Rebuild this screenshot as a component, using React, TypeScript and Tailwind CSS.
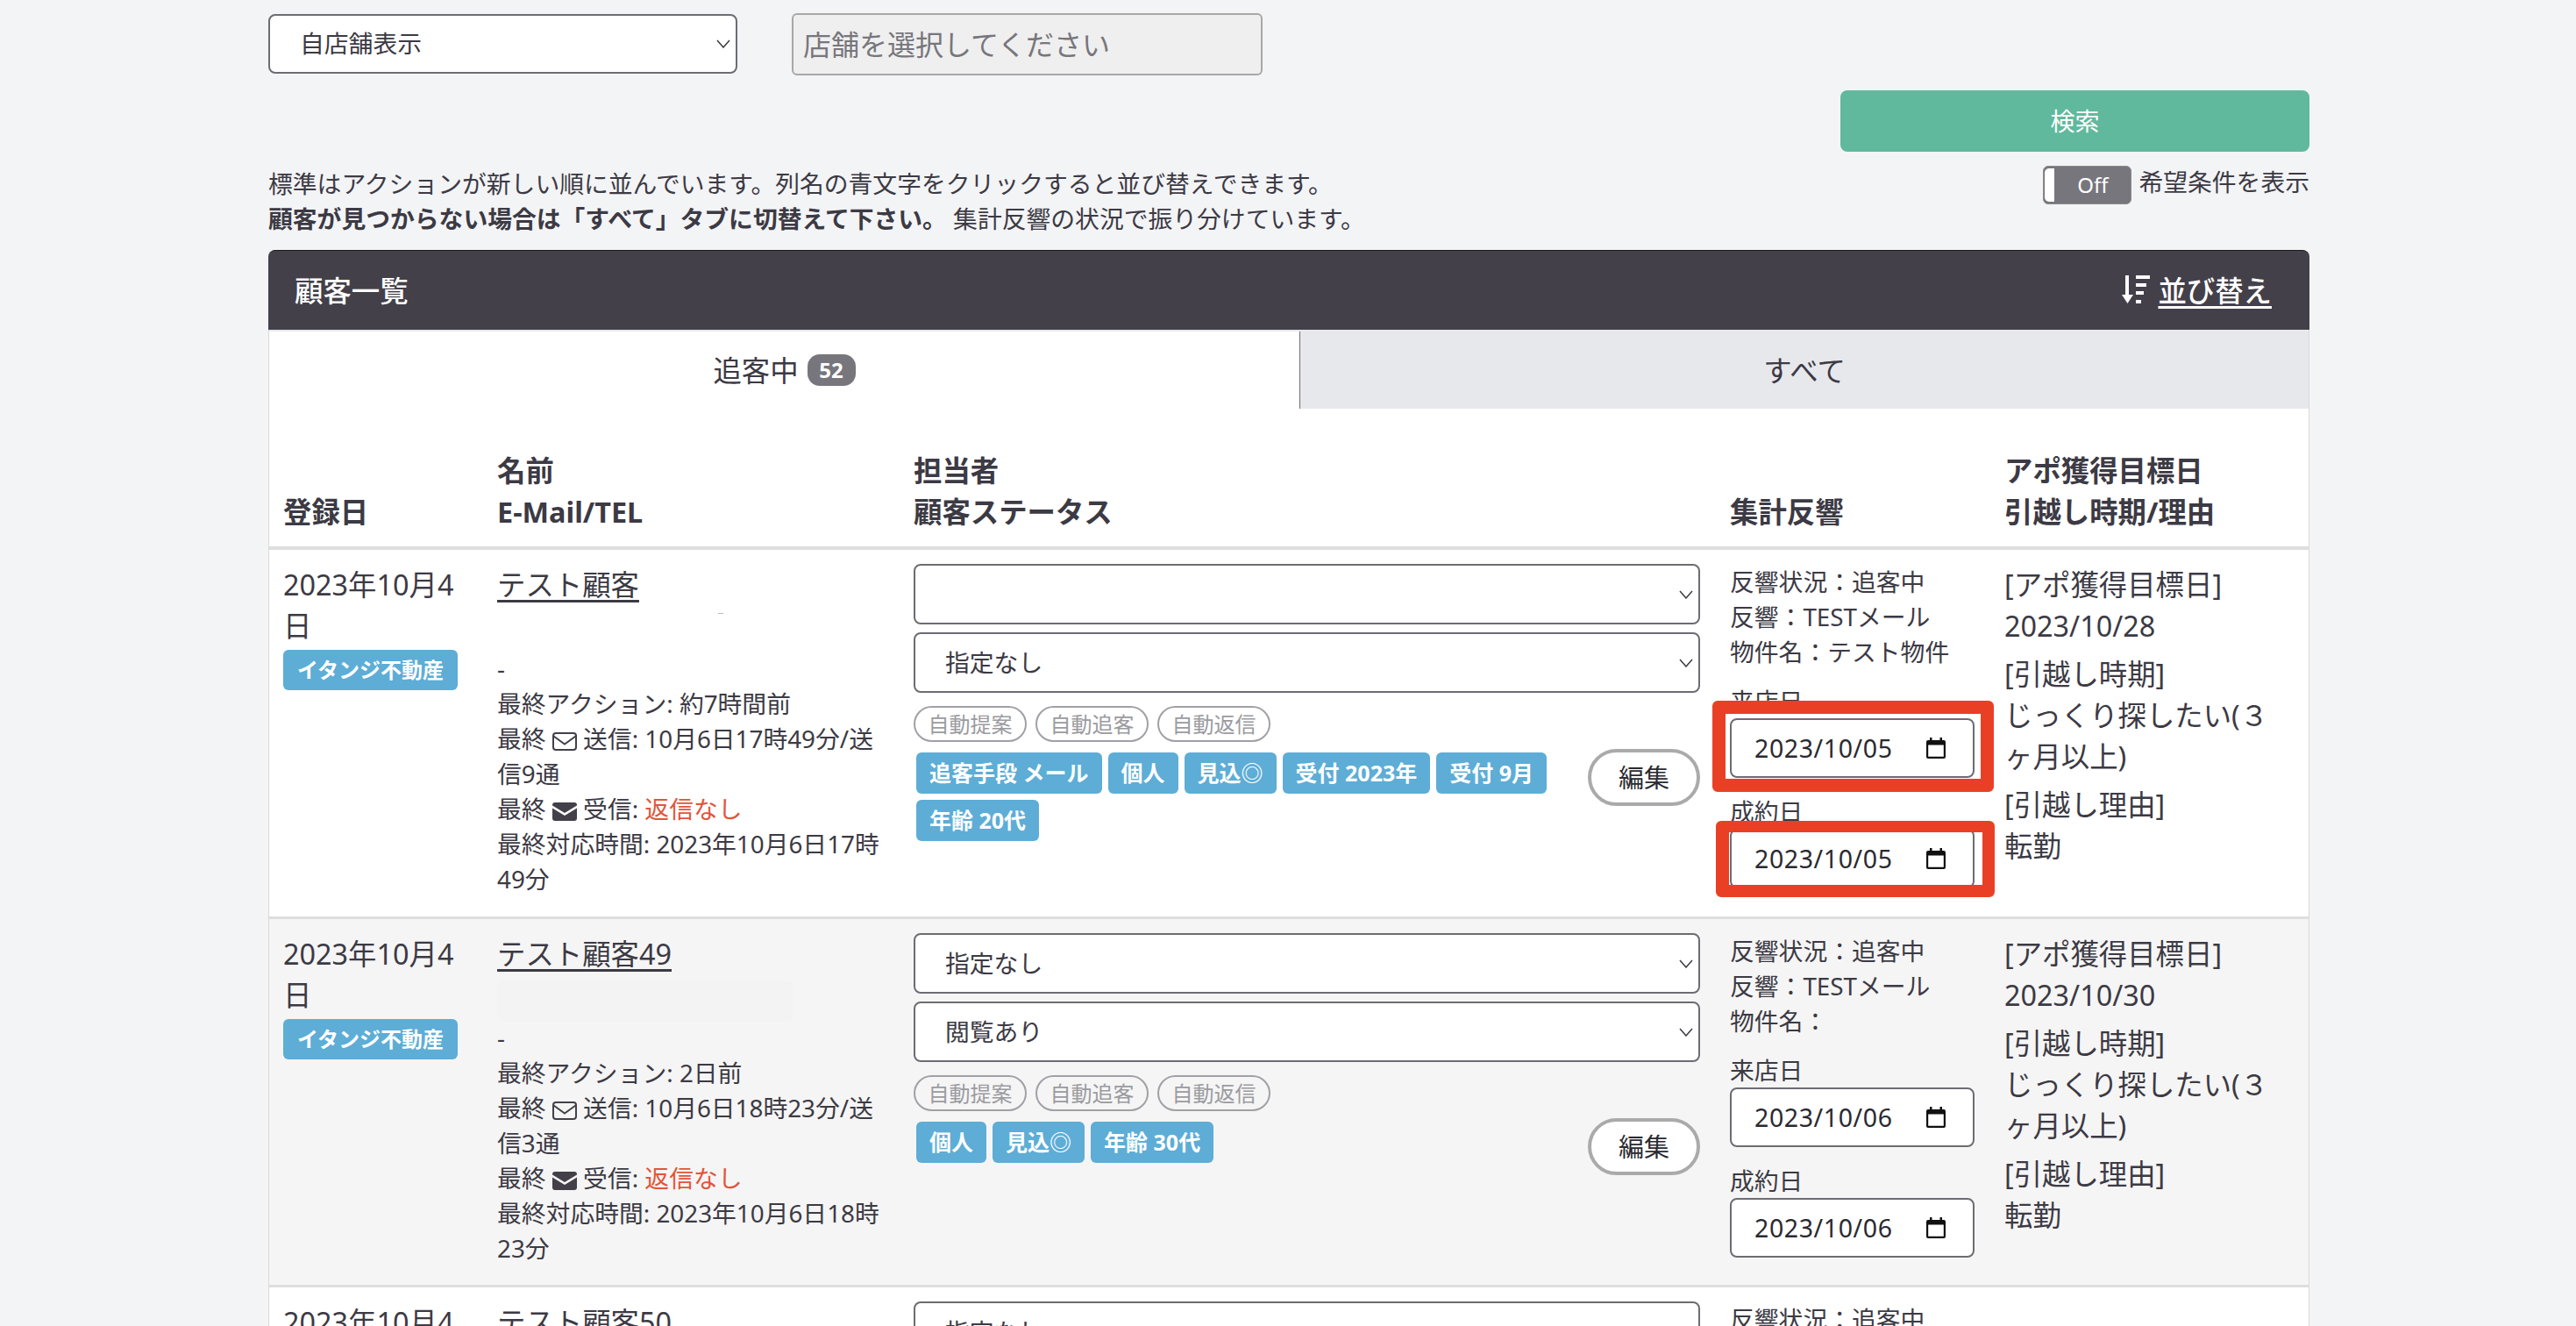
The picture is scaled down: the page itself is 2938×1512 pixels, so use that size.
import React from 'react';

interface Customer {
  name: string;
  staff: string;
  status: string;
  action: string;
  sent: string;
  lastTime: string;
  tags: string[];
  property: string;
  visit: string;
  target: string;
  rowClass: string;
  redacted?: boolean;
  marked?: boolean;
}

const customers: Customer[] = [
  {
    name: 'テスト顧客',
    staff: '',
    status: '指定なし',
    action: '約7時間前',
    sent: '10月6日17時49分/送信9通',
    lastTime: '2023年10月6日17時49分',
    tags: ['追客手段 メール', '個人', '見込◎', '受付 2023年', '受付 9月', '年齢 20代'],
    property: 'テスト物件',
    visit: '2023/10/05',
    target: '2023/10/28',
    rowClass: 'h-[421px] bg-white',
    marked: true,
  },
  {
    name: 'テスト顧客49',
    staff: '指定なし',
    status: '閲覧あり',
    action: '2日前',
    sent: '10月6日18時23分/送信3通',
    lastTime: '2023年10月6日18時23分',
    tags: ['個人', '見込◎', '年齢 30代'],
    property: '',
    visit: '2023/10/06',
    target: '2023/10/30',
    rowClass: 'h-[420px] bg-[#f5f5f5]',
    redacted: true,
  },
  {
    name: 'テスト顧客50',
    staff: '指定なし',
    status: '閲覧あり',
    action: '2日前',
    sent: '10月6日18時23分/送信3通',
    lastTime: '2023年10月6日18時23分',
    tags: ['個人', '見込◎'],
    property: '',
    visit: '2023/10/06',
    target: '',
    rowClass: 'h-[421px] bg-white',
  },
];

const Chevron = () => (
  <svg
    viewBox="0 0 16 10"
    className="pointer-events-none absolute right-[8px] top-1/2 h-[10px] w-[16px] -translate-y-1/2"
    fill="none"
    stroke="#3c3a44"
    strokeWidth="1.5"
  >
    <polyline points="1,1 8,9 15,1" />
  </svg>
);

const SelectBox = ({ value, className }: { value: string; className: string }) => (
  <div className={`relative ${className}`}>
    <select
      defaultValue={value}
      className="h-full w-full appearance-none rounded-lg border-2 border-[#6c6c74] bg-white pl-[34px] text-[27.8px] text-[#3c3a44] outline-none"
    >
      <option value={value}>{value}</option>
    </select>
    <Chevron />
  </div>
);

const CalendarIcon = () => (
  <svg viewBox="0 0 22 24" className="h-[24px] w-[22px]" fill="#111">
    <path d="M4 0h2.5v3h9V0H18v3h2a2 2 0 0 1 2 2v17a2 2 0 0 1-2 2H2a2 2 0 0 1-2-2V5a2 2 0 0 1 2-2h2V0zM2.2 8.5v13.3h17.6V8.5H2.2z" />
  </svg>
);

const SortIcon = () => (
  <svg viewBox="0 0 32 33" className="h-[33px] w-[32px]" fill="currentColor">
    <rect x="4" y="0" width="4" height="24" />
    <polygon points="0,22 13,22 6.5,32" />
    <rect x="16" y="0" width="16" height="4" />
    <rect x="16" y="9" width="12" height="4" />
    <rect x="16" y="18" width="9" height="4" />
    <rect x="16" y="28" width="6" height="4" />
  </svg>
);

const MailOutline = () => (
  <svg viewBox="0 0 28 21" className="inline-block h-[21px] w-[28px] align-[-3px]" fill="none" stroke="#43404a" strokeWidth="2">
    <rect x="1" y="1" width="26" height="19" rx="3" />
    <polyline points="1.5,4.5 14,13.5 26.5,4.5" />
  </svg>
);

const MailFilled = () => (
  <svg viewBox="0 0 28 21" className="inline-block h-[21px] w-[28px] align-[-3px]" fill="#43404a">
    <path d="M3 0h22a3 3 0 0 1 3 3v.5L14 12 0 3.5V3a3 3 0 0 1 3-3z" />
    <path d="M0 6.5 14 15 28 6.5V18a3 3 0 0 1-3 3H3a3 3 0 0 1-3-3z" />
  </svg>
);

const DateBox = ({ value }: { value: string }) => (
  <div className="flex h-[68px] w-[279px] items-center rounded-lg border-2 border-[#6c6c74] bg-white pl-[26px] text-[28.5px] tracking-[0.6px] text-[#2b2a31]">
    <span className="w-[196px]">{value}</span>
    <CalendarIcon />
  </div>
);

const CustomerRow = ({ customer }: { customer: Customer }) => (
  <tr className={customer.rowClass}>
    <td className="border-b-[3px] border-[#dedede] pl-4 pr-[20px] pt-4 align-top">
      <div className="text-[32.4px] leading-[47px]">2023年10月4日</div>
      <div className="mt-[4px] flex h-[46px] w-[199px] items-center justify-center rounded-md bg-[#5dadd6] text-[24px] font-bold text-white">
        イタンジ不動産
      </div>
    </td>
    <td className="border-b-[3px] border-[#dedede] px-4 pt-4 align-top">
      <a className="block text-[32.4px] leading-[47px] underline underline-offset-[5px]">{customer.name}</a>
      <div className="h-[52px]">
        {customer.redacted && (
          <div className="pt-[7px]">
            <div className="h-[46px] w-[338px] rounded-lg bg-[#f3f3f3]" />
          </div>
        )}
        {customer.marked && (
          <div className="ml-[252px] pt-[9px]">
            <div className="h-px w-[6px] bg-[#bbbbbb]" />
          </div>
        )}
      </div>
      <div className="text-[27.8px] leading-[40px]">
        <div>-</div>
        <div>最終アクション: {customer.action}</div>
        <div>
          最終 <MailOutline /> 送信: {customer.sent}
        </div>
        <div>
          最終 <MailFilled /> 受信: <span className="text-[#e2553a]">返信なし</span>
        </div>
        <div>最終対応時間: {customer.lastTime}</div>
      </div>
    </td>
    <td className="border-b-[3px] border-[#dedede] pl-4 pr-[18px] pt-4 align-top">
      <SelectBox value={customer.staff} className="h-[69px]" />
      <SelectBox value={customer.status} className="mt-[9px] h-[69px]" />
      <div className="mt-[15px] flex gap-[10px]">
        {['自動提案', '自動追客', '自動返信'].map((label) => (
          <span
            key={label}
            className="flex h-[41px] w-[129px] items-center justify-center rounded-full border-2 border-[#a0a0a6] text-[24px] text-[#9b9ba0]"
          >
            {label}
          </span>
        ))}
      </div>
      <div className="mt-[8px] flex items-start">
        <div className="flex flex-1 flex-wrap gap-[7px] pl-[3px] pt-[4px]">
          {customer.tags.map((tag) => (
            <span
              key={tag}
              className="flex h-[47px] items-center rounded-md bg-[#5dadd6] px-[15px] text-[25px] font-bold text-white"
            >
              {tag}
            </span>
          ))}
        </div>
        <button className="h-[65px] w-[128px] rounded-full border-4 border-[#aaaaaa] bg-white text-[29px] text-[#2b2a31]">
          編集
        </button>
      </div>
    </td>
    <td className="border-b-[3px] border-[#dedede] pl-4 pt-4 align-top">
      <div className="text-[27.8px] leading-[40px]">
        <div>反響状況：追客中</div>
        <div>反響：TESTメール</div>
        <div>物件名：{customer.property}</div>
        <div className="mt-[16px]">来店日</div>
        <div className="relative w-[279px]">
          <DateBox value={customer.visit} />
          {customer.marked && (
            <div className="pointer-events-none absolute -bottom-[16px] -left-[20px] -right-[22px] -top-[20px] rounded-md border-[15px] border-[#e94025]" />
          )}
        </div>
        <div className="mt-[18px]">成約日</div>
        <div className="relative w-[279px]">
          <DateBox value={customer.visit} />
          {customer.marked && (
            <div className="pointer-events-none absolute -bottom-[10px] -left-[16px] -right-[23px] -top-[9px] rounded-md border-b-[14px] border-l-[15px] border-r-[14px] border-t-[13px] border-[#e94025]" />
          )}
        </div>
      </div>
    </td>
    <td className="border-b-[3px] border-[#dedede] pl-4 pr-[36px] pt-4 align-top text-[32.4px] leading-[47px]">
      {customer.target && (
        <>
          <p>[アポ獲得目標日]</p>
          <p>{customer.target}</p>
          <p className="mt-[8px]">[引越し時期]</p>
          <p>じっくり探したい(３ヶ月以上)</p>
          <p className="mt-[8px]">[引越し理由]</p>
          <p>転勤</p>
        </>
      )}
    </td>
  </tr>
);

const App = () => {
  return (
    <div className="h-[1512px] overflow-hidden bg-[#f3f4f6] pl-[306px] pr-[304px] pt-[16px] font-['Noto_Sans','Noto_Sans_CJK_JP',sans-serif] text-[#3c3a44]">
      {/* Store filter */}
      <div className="flex items-start gap-[62px]">
        <SelectBox value="自店舗表示" className="h-[68px] w-[535px]" />
        <input
          disabled
          placeholder="店舗を選択してください"
          className="-mt-px h-[71px] w-[537px] rounded-md border-2 border-[#a8a8a8] bg-[#efefef] pl-[11px] text-[32px] placeholder:text-[#77767c]"
        />
      </div>

      <div className="mt-[17px] flex justify-end">
        <button className="h-[70px] w-[535px] rounded-lg bg-[#60b99c] text-[28px] text-white">検索</button>
      </div>

      {/* Notes and toggle */}
      <div className="mt-[16px] flex items-start justify-between text-[27.8px] leading-[40px]">
        <div>
          <div>標準はアクションが新しい順に並んでいます。列名の青文字をクリックすると並び替えできます。</div>
          <div>
            <b>顧客が見つからない場合は「すべて」タブに切替えて下さい。</b> 集計反響の状況で振り分けています。
          </div>
        </div>
        <div className="flex items-start gap-[8px]">
          <div className="flex h-[44px] w-[101px] items-center rounded-md border border-[#8a8a8f] bg-[#77767c] text-[24px] text-white">
            <span className="ml-px h-[38px] w-[11px] rounded-l-[5px] bg-white" />
            <span className="flex-1 text-center">Off</span>
          </div>
          <span className="-mt-[2px]">希望条件を表示</span>
        </div>
      </div>

      {/* List header */}
      <div className="mt-[16px] flex h-[91px] items-center justify-between rounded-t-lg border-t border-[#1a1a1a] bg-[#43404a] pl-[30px] pr-[43px] text-[32.4px] font-medium text-white">
        <span>顧客一覧</span>
        <a className="flex items-center gap-[9px]">
          <SortIcon />
          <span className="underline underline-offset-[5px]">並び替え</span>
        </a>
      </div>

      <div className="border-x border-[#d9d9d9] bg-white">
        {/* Tabs */}
        <div className="flex h-[90px] border-t-2 border-[#e7e8ec] text-[32.4px]">
          <div className="flex w-[1176px] items-center justify-center gap-[10px] border-r border-[#6c6c74]">
            <span>追客中</span>
            <span className="flex h-[36px] w-[55px] items-center justify-center rounded-[14px] bg-[#77767c] text-[24px] font-bold text-white">
              52
            </span>
          </div>
          <div className="flex flex-1 items-center justify-center bg-[#e7e8ec]">すべて</div>
        </div>

        <table className="w-full table-fixed border-separate border-spacing-0">
          <colgroup>
            <col className="w-[244px]" />
            <col className="w-[475px]" />
            <col className="w-[931px]" />
            <col className="w-[313px]" />
            <col />
          </colgroup>
          <thead>
            <tr className="h-[161px] text-left text-[32.4px] font-bold leading-[47px]">
              <th className="border-b-4 border-[#dedede] pb-4 pl-4 align-bottom">登録日</th>
              <th className="border-b-4 border-[#dedede] pb-4 pl-4 align-bottom">
                名前
                <br />
                E-Mail/TEL
              </th>
              <th className="border-b-4 border-[#dedede] pb-4 pl-4 align-bottom">
                担当者
                <br />
                顧客ステータス
              </th>
              <th className="border-b-4 border-[#dedede] pb-4 pl-4 align-bottom">集計反響</th>
              <th className="border-b-4 border-[#dedede] pb-4 pl-4 align-bottom">
                アポ獲得目標日
                <br />
                引越し時期/理由
              </th>
            </tr>
          </thead>
          <tbody>
            {customers.map((customer) => (
              <CustomerRow key={customer.name} customer={customer} />
            ))}
          </tbody>
        </table>
      </div>
    </div>
  );
};

export default App;
